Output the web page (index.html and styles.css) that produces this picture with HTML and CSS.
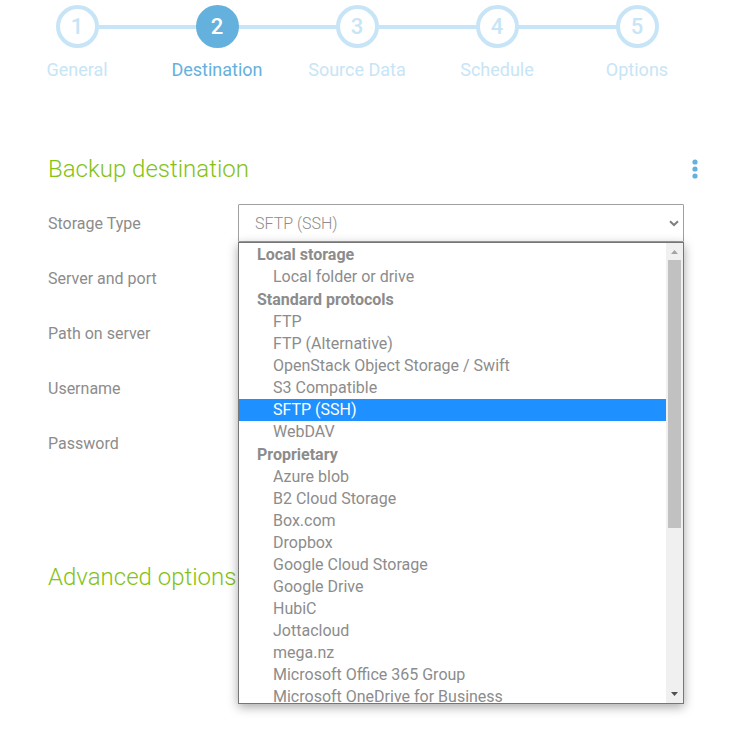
FILE: index.html
```html
<!DOCTYPE html>
<html lang="en">
<head>
<meta charset="utf-8">
<title>Backup destination</title>
<link rel="stylesheet" href="styles.css">
</head>
<body>
<main class="page">
  <ol class="steps">
    <li class="step"><span class="step-number">1</span><span>General</span></li>
    <li class="step active" aria-current="step"><span class="step-number">2</span><span>Destination</span></li>
    <li class="step"><span class="step-number">3</span><span>Source Data</span></li>
    <li class="step"><span class="step-number">4</span><span>Schedule</span></li>
    <li class="step"><span class="step-number">5</span><span>Options</span></li>
  </ol>

  <form class="form">
    <div class="heading-row">
      <h2 class="heading">Backup destination</h2>
      <button class="more" type="button" aria-label="More">
        <svg width="6" height="20" viewBox="0 0 6 20"><circle cx="3" cy="3" r="2.6"/><circle cx="3" cy="10" r="2.6"/><circle cx="3" cy="17" r="2.6"/></svg>
      </button>
    </div>

    <div class="fields">
      <div class="field">
        <label for="storage">Storage Type</label>
        <div class="select-box">
          <select id="storage" class="control"><option>SFTP (SSH)</option></select>
          <svg class="chevron" width="10" height="7" viewBox="0 0 10 7"><path d="M1 1.2 L5 5 L9 1.2"/></svg>
          <div class="menu">
            <ul class="options" role="listbox" aria-label="Storage Type">
              <li class="group">Local storage</li>
              <li class="option" role="option">Local folder or drive</li>
              <li class="group">Standard protocols</li>
              <li class="option" role="option">FTP</li>
              <li class="option" role="option">FTP (Alternative)</li>
              <li class="option" role="option">OpenStack Object Storage / Swift</li>
              <li class="option" role="option">S3 Compatible</li>
              <li class="option selected" role="option" aria-selected="true">SFTP (SSH)</li>
              <li class="option" role="option">WebDAV</li>
              <li class="group">Proprietary</li>
              <li class="option" role="option">Azure blob</li>
              <li class="option" role="option">B2 Cloud Storage</li>
              <li class="option" role="option">Box.com</li>
              <li class="option" role="option">Dropbox</li>
              <li class="option" role="option">Google Cloud Storage</li>
              <li class="option" role="option">Google Drive</li>
              <li class="option" role="option">HubiC</li>
              <li class="option" role="option">Jottacloud</li>
              <li class="option" role="option">mega.nz</li>
              <li class="option" role="option">Microsoft Office 365 Group</li>
              <li class="option" role="option">Microsoft OneDrive for Business</li>
            </ul>
            <div class="scrollbar">
              <svg class="arrow-up" width="17" height="17" viewBox="0 0 17 17"><path d="M5 11 L8.5 7 L12 11 Z"/></svg>
              <div class="track"><div class="thumb"></div></div>
              <svg class="arrow-down" width="17" height="17" viewBox="0 0 17 17"><path d="M5 6 L12 6 L8.5 10 Z"/></svg>
            </div>
          </div>
        </div>
      </div>
      <div class="field">
        <label for="server">Server and port</label>
        <div class="pair">
          <input id="server" class="control" type="text">
          <input class="control port" type="text" aria-label="Port">
        </div>
      </div>
      <div class="field"><label for="path">Path on server</label><input id="path" class="control" type="text"></div>
      <div class="field"><label for="user">Username</label><input id="user" class="control" type="text"></div>
      <div class="field"><label for="password">Password</label><input id="password" class="control" type="password"></div>
    </div>

    <h2 class="heading advanced">Advanced options</h2>
  </form>
</main>
</body>
</html>
```
FILE: styles.css
```css
* {
  box-sizing: border-box;
}

body {
  margin: 0;
  background: #fff;
  color: #8c8c8c;
  font: 400 16px/22px Roboto, "Liberation Sans", sans-serif;
}

.page {
  min-height: 100vh;
  padding: 5px 35px 40px 7px;
}

.steps {
  display: flex;
  margin: 0;
  padding: 0;
  list-style: none;
}

.step {
  position: relative;
  flex: 1;
  display: flex;
  flex-direction: column;
  align-items: center;
  gap: 11px;
  color: #c7e5f6;
  font-size: 18px;
}

.step + .step::before {
  content: "";
  position: absolute;
  top: 20px;
  right: 50%;
  width: 100%;
  height: 4px;
  background: #c7e5f6;
}

.step-number {
  position: relative;
  z-index: 1;
  display: flex;
  align-items: center;
  justify-content: center;
  width: 43px;
  height: 43px;
  border: 4px solid #c7e5f6;
  border-radius: 50%;
  background: #fff;
  font-size: 22px;
  font-weight: 500;
}

.active {
  color: #65b1dd;
}

.active .step-number {
  border-color: #65b1dd;
  background: #65b1dd;
  color: #fff;
}

.form {
  padding: 72px 0 0 41px;
}

.heading-row {
  display: flex;
  align-items: center;
  justify-content: space-between;
}

.heading {
  margin: 0;
  color: #84c213;
  font-size: 24px;
  font-weight: 300;
  line-height: 32px;
}

.more {
  display: flex;
  padding: 0 9px 0 0;
  border: 0;
  background: none;
  fill: #65b1dd;
}

.fields {
  display: grid;
  gap: 17px;
  padding: 19px 23px 0 0;
}

.field {
  display: grid;
  grid-template-columns: 190px 1fr;
  align-items: center;
  height: 38px;
}

.field label {
  padding-top: 2px;
}

.pair {
  display: flex;
}

.port {
  flex: 0 0 80px;
}

.control {
  width: 100%;
  height: 38px;
  padding: 2px 16px 0;
  border: 1px solid #a0a0a0;
  border-radius: 1px;
  background: #fff;
  color: #8c8c8c;
  font: inherit;
  font-weight: 300;
  appearance: none;
}

.select-box {
  position: relative;
}

.chevron {
  position: absolute;
  top: 16px;
  right: 5px;
  fill: none;
  stroke: #808080;
  stroke-width: 2;
}

.menu {
  position: absolute;
  z-index: 2;
  top: 100%;
  left: 0;
  display: flex;
  width: 100%;
  height: 462px;
  border: 1px solid #767676;
  background: #fff;
  box-shadow: 0 3px 10px rgba(0, 0, 0, 0.35);
}

.options {
  flex: 1;
  margin: 0;
  padding: 0;
  overflow: hidden;
  list-style: none;
}

.group {
  height: 23px;
  padding-left: 18px;
  font-weight: 700;
  line-height: 23px;
}

.option {
  height: 22px;
  padding-left: 34px;
}

.selected {
  background: #1e90ff;
  color: #fff;
}

.scrollbar {
  display: flex;
  flex-direction: column;
  width: 17px;
  background: #f0f0f0;
}

.track {
  flex: 1;
  padding: 0 2px;
}

.thumb {
  height: 63%;
  background: #c1c1c1;
}

.arrow-up {
  fill: #a3a3a3;
}

.arrow-down {
  fill: #505050;
}

.advanced {
  padding-top: 99px;
}
```
